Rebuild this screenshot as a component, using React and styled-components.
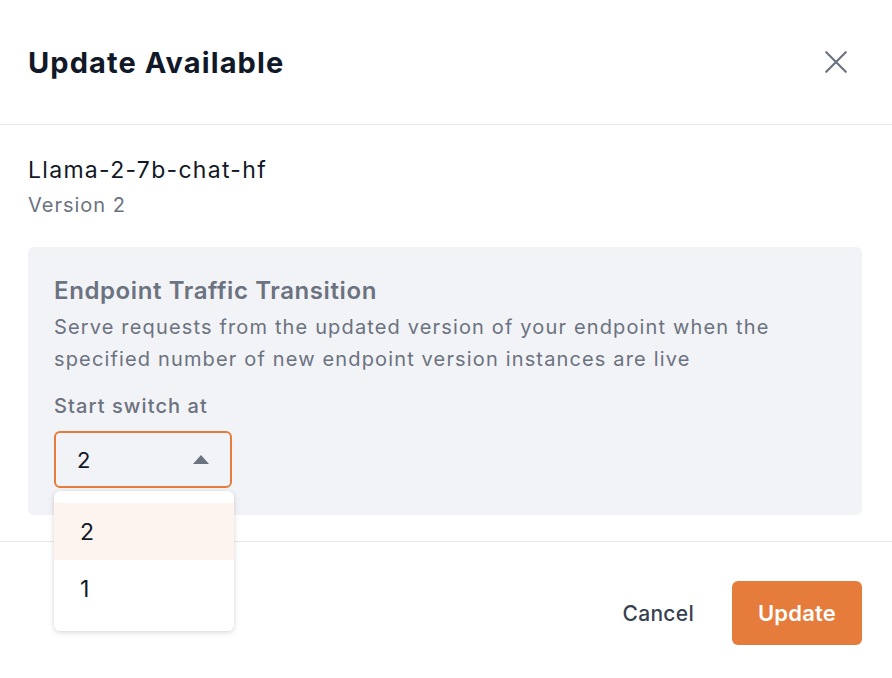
import React from "react";
import styled, { createGlobalStyle } from "styled-components";

const Global = createGlobalStyle`
  html, body { margin: 0; padding: 0; background: #fff; }
  body { font-family: Inter, "Noto Sans", sans-serif; color: #111827; }
  * { box-sizing: border-box; }
`;

const Dialog = styled.div`
  width: 892px;
  min-height: 678px;
  background: #fff;
`;

const Header = styled.div`
  height: 125px;
  display: flex;
  align-items: center;
  justify-content: space-between;
  padding: 0 40px 0 28px;
  border-bottom: 1px solid #e5e7eb;
`;

const Title = styled.h2`
  margin: 0;
  font-size: 29px;
  font-weight: 700;
  letter-spacing: 1.1px;
  color: #111827;
`;

const CloseButton = styled.button`
  border: none;
  background: none;
  padding: 0;
  width: 32px;
  height: 32px;
  display: flex;
  align-items: center;
  justify-content: center;
  cursor: pointer;
`;

const Body = styled.div`
  padding: 28px 30px 26px 28px;
`;

const ModelName = styled.div`
  font-size: 23px;
  line-height: 34px;
  letter-spacing: 1.3px;
  color: #111827;
`;

const Version = styled.div`
  margin-top: 4px;
  font-size: 20px;
  line-height: 28px;
  letter-spacing: 1px;
  color: #6b7280;
`;

const Panel = styled.div`
  margin-top: 28px;
  background: #f2f3f6;
  border-radius: 6px;
  padding: 28px 26px 27px;
`;

const PanelTitle = styled.div`
  font-size: 24px;
  line-height: 32px;
  font-weight: 600;
  letter-spacing: 0.6px;
  color: #6b7280;
`;

const PanelText = styled.p`
  margin: 4px 0 0;
  font-size: 20px;
  line-height: 32px;
  letter-spacing: 1.15px;
  color: #6b7280;
`;

const Label = styled.div`
  margin-top: 17px;
  font-size: 20px;
  line-height: 28px;
  font-weight: 500;
  letter-spacing: 1.1px;
  color: #6b7280;
`;

const SelectWrap = styled.div`
  position: relative;
  margin-top: 11px;
  width: 178px;
`;

const SelectBox = styled.div`
  height: 57px;
  border: 2px solid #e67c3b;
  border-radius: 6px;
  display: flex;
  align-items: center;
  justify-content: space-between;
  padding: 0 21px 0 21px;
  font-size: 22px;
  color: #111827;
`;

const Menu = styled.ul`
  position: absolute;
  top: 60px;
  left: 0;
  width: 180px;
  margin: 0;
  padding: 12px 0 14px;
  list-style: none;
  background: #fff;
  border-radius: 6px;
  box-shadow: 0 1px 4px rgba(0, 0, 0, 0.12), 0 2px 8px rgba(0, 0, 0, 0.06);
  z-index: 10;
`;

const Option = styled.li`
  height: 57px;
  display: flex;
  align-items: center;
  padding-left: 26px;
  font-size: 23px;
  color: #111827;
  background: ${(p) => (p.active ? "#fdf4ef" : "transparent")};
`;

const Footer = styled.div`
  border-top: 1px solid #e5e7eb;
  padding: 39px 30px 30px;
  display: flex;
  justify-content: flex-end;
  align-items: center;
  gap: 38px;
`;

const Cancel = styled.button`
  border: none;
  background: none;
  padding: 0;
  font-family: inherit;
  font-size: 21px;
  font-weight: 500;
  letter-spacing: 0.3px;
  color: #374151;
  cursor: pointer;
`;

const Primary = styled.button`
  border: none;
  width: 130px;
  height: 64px;
  border-radius: 6px;
  background: #e67c3b;
  color: #fff;
  font-family: inherit;
  font-size: 22px;
  font-weight: 600;
  letter-spacing: 0.2px;
  cursor: pointer;
`;

export default function App() {
  return (
    <Dialog>
      <Global />
      <Header>
        <Title>Update Available</Title>
        <CloseButton aria-label="Close">
          <svg width="26" height="26" viewBox="0 0 24 24" fill="none">
            <path d="M3 3L21 21M21 3L3 21" stroke="#6b7280" strokeWidth="2" strokeLinecap="round" />
          </svg>
        </CloseButton>
      </Header>
      <Body>
        <ModelName>Llama-2-7b-chat-hf</ModelName>
        <Version>Version 2</Version>
        <Panel>
          <PanelTitle>Endpoint Traffic Transition</PanelTitle>
          <PanelText>
            Serve requests from the updated version of your endpoint when the specified number of new endpoint
            version instances are live
          </PanelText>
          <Label>Start switch at</Label>
          <SelectWrap>
            <SelectBox>
              <span>2</span>
              <svg width="16" height="9" viewBox="0 0 16 9">
                <path d="M8 0L16 9H0Z" fill="#6b7280" />
              </svg>
            </SelectBox>
            <Menu>
              <Option active>2</Option>
              <Option>1</Option>
            </Menu>
          </SelectWrap>
        </Panel>
      </Body>
      <Footer>
        <Cancel>Cancel</Cancel>
        <Primary>Update</Primary>
      </Footer>
    </Dialog>
  );
}
